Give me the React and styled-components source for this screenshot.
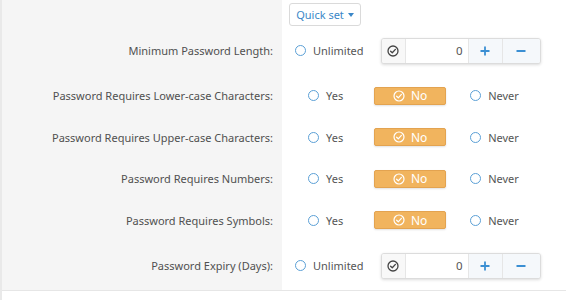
import React from "react";
import styled, { createGlobalStyle } from "styled-components";

const Global = createGlobalStyle`
  html, body { margin: 0; padding: 0; background: #fff; }
  body { font-family: "Noto Sans", "Open Sans", sans-serif; font-size: 12px; color: #555; }
`;

const Page = styled.div`
  width: 566px;
  height: 300px;
  border-left: 2px solid #e9e9e9;
  box-sizing: border-box;
  background: #fff;
`;

const Form = styled.div`
  display: grid;
  grid-template-columns: 280px 1fr;
  border-bottom: 1px solid #e6e6e6;
`;

const Label = styled.div`
  background: #f5f5f5;
  display: flex;
  align-items: center;
  justify-content: flex-end;
  padding-right: 9px;
  height: ${(p) => p.$h}px;
  font-size: 11px;
  color: #505050;
  white-space: nowrap;
`;

const Value = styled.div`
  display: flex;
  align-items: center;
  height: ${(p) => p.$h}px;
  padding-left: ${(p) => p.$pl}px;
  box-sizing: border-box;
`;

const HeaderValue = styled.div`
  padding: 3px 0 0 7px;
  height: 26px;
  box-sizing: border-box;
`;

const QuickSet = styled.button`
  height: 23px;
  width: 72px;
  border: 1px solid #dadada;
  border-radius: 3px;
  background: #fff;
  color: #3a87c8;
  font-family: inherit;
  font-size: 11px;
  display: flex;
  align-items: center;
  justify-content: center;
  gap: 4px;
  padding: 0;
`;

const Caret = styled.span`
  width: 0;
  height: 0;
  border-left: 3.5px solid transparent;
  border-right: 3.5px solid transparent;
  border-top: 4px solid #3a87c8;
  margin-top: 1px;
`;

const Radio = styled.label`
  display: flex;
  align-items: center;
  gap: 7px;
  color: #555;
  font-size: 11px;
  margin-right: ${(p) => p.$mr || 0}px;
`;

const Circle = styled.span`
  width: 11px;
  height: 11px;
  box-sizing: border-box;
  border: 1.5px solid #5ba0d6;
  border-radius: 50%;
  flex: none;
`;

const Spinner = styled.div`
  display: flex;
  height: 26px;
  border: 1px solid #dcdcdc;
  border-radius: 3px;
  box-shadow: 0 1px 3px rgba(0, 0, 0, 0.14);
  box-sizing: border-box;
  overflow: hidden;
  background: #fff;
`;

const Cell = styled.div`
  width: ${(p) => p.$w}px;
  display: flex;
  align-items: center;
  justify-content: ${(p) => (p.$end ? "flex-end" : "center")};
  padding-right: ${(p) => (p.$end ? 5 : 0)}px;
  box-sizing: border-box;
  background: ${(p) => p.$bg || "#fff"};
  border-left: ${(p) => (p.$first ? "none" : "1px solid #e6e6e6")};
  color: #555;
  font-size: 11.5px;
`;

const Toggle = styled.div`
  width: 72px;
  height: 18px;
  box-sizing: border-box;
  background: #f1b45e;
  border: 1px solid #e3a350;
  border-radius: 2px;
  box-shadow: 0 1px 2px rgba(0, 0, 0, 0.12);
  color: #fff;
  display: flex;
  align-items: center;
  justify-content: center;
  gap: 6px;
  font-size: 12px;
  margin-right: 24px;
`;

const CheckCircle = ({ color = "#444", size = 12, sw = 1.3 }) => (
  <svg width={size} height={size} viewBox="0 0 12 12" fill="none">
    <circle cx="6" cy="6" r="5" stroke={color} strokeWidth={sw} />
    <path d="M3.6 6.2 L5.3 7.8 L8.4 4.4" stroke={color} strokeWidth={sw} strokeLinecap="round" strokeLinejoin="round" />
  </svg>
);

const Plus = () => (
  <svg width="10" height="10" viewBox="0 0 10 10">
    <path d="M5 0.5 V9.5 M0.5 5 H9.5" stroke="#3b8fd3" strokeWidth="1.8" />
  </svg>
);
const Minus = () => (
  <svg width="10" height="10" viewBox="0 0 10 10">
    <path d="M0.5 5 H9.5" stroke="#3b8fd3" strokeWidth="1.8" />
  </svg>
);

const SpinRow = ({ label }) => (
  <>
    <Label $h={49}>{label}</Label>
    <Value $h={49} $pl={13}>
      <Radio $mr={17}><Circle />Unlimited</Radio>
      <Spinner>
        <Cell $w={23} $first $bg="#f8f8f8"><CheckCircle /></Cell>
        <Cell $w={63} $end>0</Cell>
        <Cell $w={34} $bg="#f5f8fb"><Plus /></Cell>
        <Cell $w={38} $bg="#f5f8fb"><Minus /></Cell>
      </Spinner>
    </Value>
  </>
);

const ToggleRow = ({ label }) => (
  <>
    <Label $h={41.5}>{label}</Label>
    <Value $h={41.5} $pl={26}>
      <Radio $mr={31}><Circle />Yes</Radio>
      <Toggle><CheckCircle color="#fff" size={12} sw={1.2} />No</Toggle>
      <Radio><Circle />Never</Radio>
    </Value>
  </>
);

export default function App() {
  return (
    <>
      <Global />
      <Page>
        <Form>
          <Label $h={26} />
          <HeaderValue>
            <QuickSet>Quick set <Caret /></QuickSet>
          </HeaderValue>
          <SpinRow label="Minimum Password Length:" />
          <ToggleRow label="Password Requires Lower-case Characters:" />
          <ToggleRow label="Password Requires Upper-case Characters:" />
          <ToggleRow label="Password Requires Numbers:" />
          <ToggleRow label="Password Requires Symbols:" />
          <SpinRow label="Password Expiry (Days):" />
        </Form>
      </Page>
    </>
  );
}
